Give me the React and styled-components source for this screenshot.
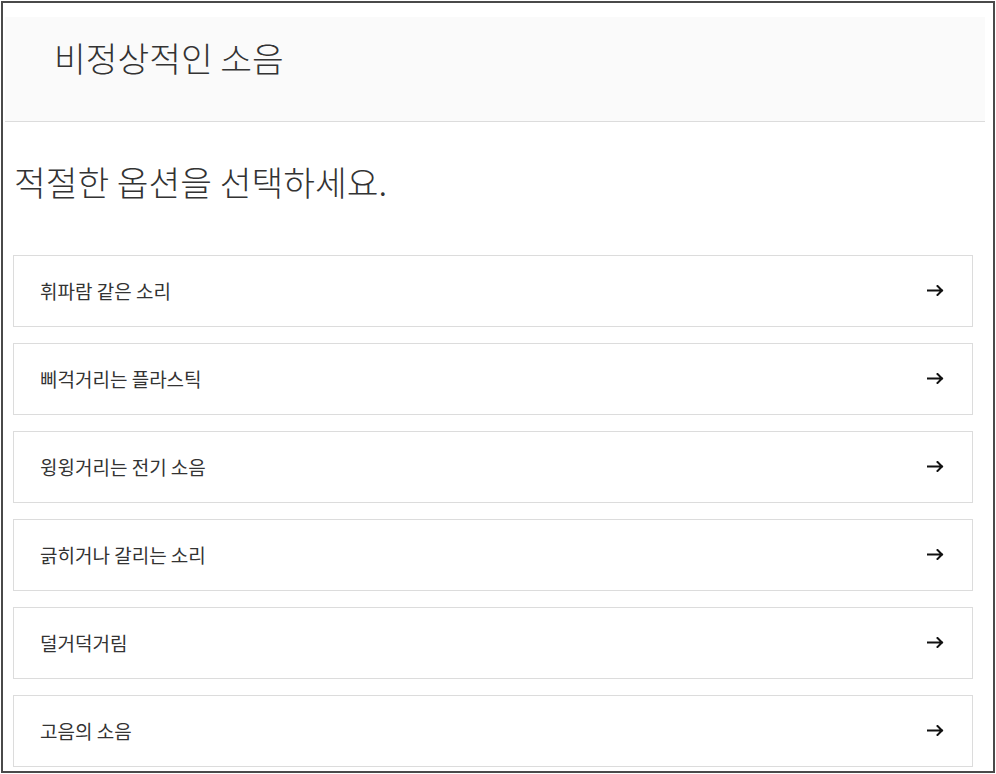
import React from "react";
import styled, { createGlobalStyle } from "styled-components";

const GlobalStyle = createGlobalStyle`
  html, body {
    margin: 0;
    padding: 0;
    background: #fff;
  }
  body {
    font-family: "Noto Sans CJK KR", "Noto Sans", sans-serif;
    color: #333;
  }
`;

const Frame = styled.div`
  box-sizing: border-box;
  margin: 1px;
  height: 772px;
  border: 2px solid #4a4a4a;
  padding-top: 14px;
  overflow: hidden;
`;

const Header = styled.header`
  display: flex;
  align-items: flex-start;
  box-sizing: border-box;
  height: 105px;
  margin: 0 8px 0 2px;
  padding: 20px 0 0 49px;
  background: #fafafa;
  border-bottom: 1px solid #dcdcdc;
`;

const Title = styled.h1`
  margin: 0;
  font-size: 34.5px;
  font-weight: 300;
  color: #333;
  line-height: 40px;
`;

const Content = styled.main`
  padding: 0 20px 0 10px;
`;

const Question = styled.h2`
  margin: 37px 0 0 1px;
  font-size: 34.5px;
  font-weight: 300;
  line-height: 44px;
  color: #333;
`;

const Options = styled.ul`
  list-style: none;
  margin: 52px 0 0;
  padding: 0;
  display: flex;
  flex-direction: column;
  gap: 16px;
`;

const Option = styled.li`
  box-sizing: border-box;
  height: 72px;
  display: flex;
  align-items: center;
  justify-content: space-between;
  padding: 0 28px 2px 26px;
  border: 1px solid #dcdcdc;
  background: #fff;
  cursor: pointer;
`;

const Label = styled.span`
  font-size: 19px;
  font-weight: 400;
  color: #333;
`;

const Arrow = () => (
  <svg width="17" height="11" viewBox="0 0 17 11" fill="none">
    <path
      d="M0.5 5.5H15M10.5 1L15 5.5L10.5 10"
      stroke="#111"
      strokeWidth="2"
      strokeLinecap="square"
    />
  </svg>
);

const options = [
  "휘파람 같은 소리",
  "삐걱거리는 플라스틱",
  "윙윙거리는 전기 소음",
  "긁히거나 갈리는 소리",
  "덜거덕거림",
  "고음의 소음",
];

const App = () => {
  return (
    <>
      <GlobalStyle />
      <Frame>
        <Header>
          <Title>비정상적인 소음</Title>
        </Header>
        <Content>
          <Question>적절한 옵션을 선택하세요.</Question>
          <Options>
            {options.map((o) => (
              <Option key={o}>
                <Label>{o}</Label>
                <Arrow />
              </Option>
            ))}
          </Options>
        </Content>
      </Frame>
    </>
  );
};

export default App;
